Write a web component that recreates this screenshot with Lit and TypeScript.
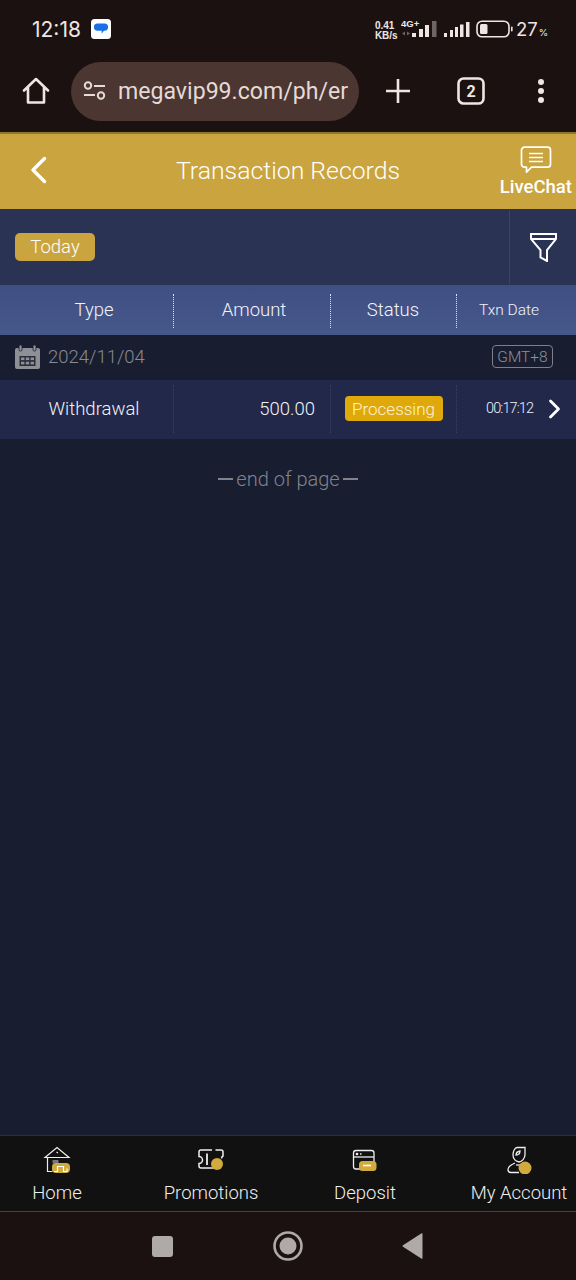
import { LitElement, html, css } from "lit";
import { customElement } from "lit/decorators.js";

@customElement("app-root")
export class AppRoot extends LitElement {
  static styles = css`
    :host { display: flex; flex-direction: column; width: 576px; height: 1280px; overflow: hidden; background: #181e30; font-family: Roboto, "Liberation Sans", sans-serif; color: #fff; }
    svg { display: block; flex: none; }
    .status { height: 60px; background: #1a1110; display: flex; align-items: center; padding: 0 0 2px 32px; box-sizing: border-box; color: #efe6e4; }
    .time { font-family: Inter, Roboto, sans-serif; font-size: 21px; font-weight: 400; width: 59px; }
    .spacer { flex: 1; }
    .speed { font: 700 10px/10px "Liberation Sans", sans-serif; width: 26px; margin-top: 4px; }
    .signal { margin-left: 5px; margin-top: 2px; }
    .battery { margin-left: 6px; }
    .pct { font-size: 18.5px; font-family: Inter, Roboto, sans-serif; margin-left: 2px; margin-right: 28px; display: flex; align-items: baseline; }
    .pct small { font-size: 9.5px; margin-left: 1px; }
    .toolbar { height: 72px; background: #1a1110; display: flex; align-items: center; padding-bottom: 10px; box-sizing: border-box; }
    .homebtn { width: 71px; display: flex; justify-content: center; }
    .url { width: 288px; height: 59px; border-radius: 30px; background: #4b3632; display: flex; align-items: center; padding-left: 12px; box-sizing: border-box; gap: 12px; color: #e6dad7; font-size: 23.1px; font-family: Roboto, sans-serif; white-space: nowrap; }
    .tools { flex: 1; display: flex; align-items: center; }
    .tools > div { display: flex; justify-content: center; }
    .header { height: 77px; box-sizing: border-box; border-top: 2px solid #8f7433; background: #c9a43f; display: flex; align-items: center; position: relative; justify-content: center; padding-bottom: 2px; }
    .back { position: absolute; left: 30px; top: 22px; }
    .title { font-size: 24.8px; font-weight: 300; color: #fff; }
    .chat { position: absolute; right: 4px; top: 12px; display: flex; flex-direction: column; align-items: center; font-size: 18.5px; font-weight: 500; gap: 3px; line-height: 20px; }
    .chat svg { margin-left: 1px; }
    .filterbar { height: 76px; box-sizing: border-box; background: #2a3353; display: flex; align-items: center; }
    .today { margin-left: 15px; width: 80px; height: 28px; border-radius: 5px; background: #c9a43f; font-size: 18.5px; font-weight: 300; display: flex; align-items: center; justify-content: center; }
    .funnel { width: 66px; height: 74px; border-left: 1px solid #3a4465; display: flex; align-items: center; justify-content: center; margin-left: auto; }
    .row { display: grid; grid-template-columns: 173px 157px 126px 120px; }
    .thead { height: 50px; background: linear-gradient(#3f4f84, #46578a); }
    .cell { display: flex; align-items: center; justify-content: center; position: relative; }
    .thead .cell { font-size: 18.5px; font-weight: 300; color: #f2f4fa; }
    .thead .cell + .cell::before, .tbody .cell + .cell::before { content: ""; position: absolute; left: 0; border-left: 1px dotted #dfe3ef; }
    .thead .cell + .cell::before { top: 9px; bottom: 7px; }
    .thead .small { font-size: 15.5px; padding-right: 14px; }
    .first { padding-left: 15px; }
    .second { padding-left: 5px; }
    .date { height: 45px; padding: 0 23px 2px 15px; box-sizing: border-box; background: #181e30; display: flex; align-items: center; color: #878a94; font-size: 18.5px; font-weight: 300; gap: 8px; }
    .gmt { margin-left: auto; border: 1px solid #7d808a; border-radius: 4px; font-size: 15.5px; width: 61px; height: 23px; display: flex; align-items: center; justify-content: center; box-sizing: border-box; font-weight: 300; color: #8d909a; }
    .tbody { height: 59px; background: #22284a; }
    .tbody .cell { font-size: 18.5px; font-weight: 300; color: #f2f2f6; padding-bottom: 2px; }
    .tbody .cell + .cell::before { top: 5px; bottom: 6px; border-left-color: #3a4160; }
    .amount { justify-content: flex-end !important; padding-right: 15px; }
    .badge { width: 98px; height: 25px; margin-left: 1px; border-radius: 4px; background: #dfa90b; font-size: 17px; font-weight: 300; display: flex; align-items: center; justify-content: center; color: #fdf3d2; }
    .time-cell { justify-content: flex-start !important; padding-left: 30px; gap: 15px; }
    .clock { font-size: 14.5px; letter-spacing: -0.9px; font-weight: 300; }
    .end { padding-top: 27px; height: 26px; display: flex; justify-content: center; align-items: center; gap: 3px; color: #80838e; font-size: 20px; font-weight: 300; }
    .end i { display: block; width: 15px; height: 1.5px; background: #80838e; }
    .main { flex: 1; }
    .nav { height: 76px; background: #111111; border-top: 1px solid #2b3038; box-sizing: border-box; display: grid; grid-template-columns: repeat(4, 154px); justify-content: center; }
    .nav a { display: flex; flex-direction: column; align-items: center; padding-top: 10px; font-size: 18.5px; font-weight: 300; color: #f0f0f0; line-height: 22px; gap: 8px; }
    .sys { height: 69px; box-sizing: border-box; border-top: 1px solid #4a3f3c; background: #1a1110; display: flex; align-items: center; padding: 0 0 0 152px; }
    .square { width: 21px; height: 21px; border-radius: 3px; background: #afa9a8; }
    .ring { margin-left: 100px; }
    .tri { margin-left: 99px; }
  `;

  render() {
    return html`
      <div class="status">
        <div class="time">12:18</div>
        <svg width="20" height="20" viewBox="0 0 20 20"><rect width="20" height="20" rx="3.5" fill="#fff"/><path d="M6.5 4.5h7a3.6 3.6 0 0 1 0 7.2h-.6l-2.2 3v-3H6.5a3.6 3.6 0 0 1 0-7.2z" fill="#1a6fe8"/></svg>
        <div class="spacer"></div>
        <div class="speed">0.41<br />KB/s</div>
        <svg width="37" height="24" viewBox="0 0 37 24">
          <text x="0" y="9.5" font-family="Liberation Sans" font-weight="700" font-size="9.5" fill="#efe6e4">4G+</text>
          <path d="M1 16.5l3-2v4zM9 16.5l-3-2v4z" fill="#6c6462"/>
          <rect x="11" y="16" width="4" height="4" fill="#efe6e4"/><rect x="18" y="12" width="4" height="8" fill="#efe6e4"/><rect x="24" y="8" width="4" height="12" fill="#efe6e4"/><rect x="31" y="4" width="4.5" height="16" fill="#6e6664"/>
        </svg>
        <svg class="signal" width="27" height="18" viewBox="0 0 27 18">
          <rect x="1" y="12" width="3" height="4" fill="#efe6e4"/><rect x="7" y="9" width="3" height="7" fill="#efe6e4"/><rect x="12" y="6" width="3" height="10" fill="#efe6e4"/><rect x="17" y="3.5" width="3.5" height="12.5" fill="#efe6e4"/><rect x="23" y="1" width="3.5" height="15" fill="#efe6e4"/>
        </svg>
        <svg class="battery" width="38" height="18" viewBox="0 0 38 18">
          <rect x="1" y="1.2" width="32" height="15.6" rx="5" fill="none" stroke="#efe6e4" stroke-width="1.6"/><rect x="4" y="4" width="7.5" height="10" rx="1.5" fill="#efe6e4"/><rect x="35" y="6.5" width="1.6" height="5" rx="0.8" fill="#efe6e4"/>
        </svg>
        <div class="pct">27<small>%</small></div>
      </div>

      <div class="toolbar">
        <div class="homebtn">
          <svg width="28" height="28" viewBox="0 0 28 28" fill="none" stroke="#efe6e4" stroke-width="2.6" stroke-linejoin="round" stroke-linecap="round"><path d="M2 13.5L14 2l12 11.5M6 10v15.5h16V10"/></svg>
        </div>
        <div class="url">
          <svg width="23" height="20" viewBox="0 0 23 20" fill="none" stroke="#e6dad7" stroke-width="2"><circle cx="5" cy="4.5" r="3.2"/><path d="M11 5h11M1 14h11"/><circle cx="18" cy="14.5" r="3.2"/></svg>
          <span>megavip99.com/ph/er</span>
        </div>
        <div class="tools">
          <div style="width:77px">
            <svg width="24" height="24" viewBox="0 0 24 24" stroke="#efe6e4" stroke-width="2.6"><path d="M12 0v24M0 12h24"/></svg>
          </div>
          <div style="width:70px">
            <svg width="28" height="28" viewBox="0 0 28 28"><rect x="1.5" y="1.5" width="25" height="25" rx="5" fill="none" stroke="#efe6e4" stroke-width="2.6"/><text x="14" y="20" text-anchor="middle" font-family="Roboto" font-weight="700" font-size="16" fill="#efe6e4">2</text></svg>
          </div>
          <div style="width:70px">
            <svg width="8" height="26" viewBox="0 0 8 26" fill="#efe6e4"><circle cx="4" cy="4" r="3"/><circle cx="4" cy="13" r="3"/><circle cx="4" cy="22" r="3"/></svg>
          </div>
        </div>
      </div>

      <div class="header">
        <svg class="back" width="17" height="28" viewBox="0 0 17 28" fill="none" stroke="#fff" stroke-width="3.4" stroke-linecap="round" stroke-linejoin="round"><path d="M14.5 2.5L3 14l11.5 11.5"/></svg>
        <div class="title">Transaction Records</div>
        <div class="chat">
          <svg width="32" height="28" viewBox="0 0 32 28" fill="none" stroke="#fff" stroke-width="1.7" stroke-linejoin="round"><path d="M4.5 1.2h23a3 3 0 0 1 3 3v14a3 3 0 0 1-3 3h-16l-5 5v-5h-2a3 3 0 0 1-3-3v-14a3 3 0 0 1 3-3z"/><path d="M9 7.5h14M9 11.5h14M9 15.5h14"/></svg>
          <span>LiveChat</span>
        </div>
      </div>

      <div class="filterbar">
        <div class="today">Today</div>
        <div class="funnel">
          <svg width="27" height="29" viewBox="0 0 27 29" fill="none" stroke="#fff" stroke-width="2"><path d="M1 1h25v5L17 17v11l-6.5-3.5V17L1 6zM1 6h25"/></svg>
        </div>
      </div>

      <div class="row thead">
        <div class="cell first">Type</div>
        <div class="cell second">Amount</div>
        <div class="cell">Status</div>
        <div class="cell"><span class="small">Txn Date</span></div>
      </div>

      <div class="date">
        <svg width="25" height="24" viewBox="0 0 25 24"><rect x="0" y="3" width="25" height="21" rx="2" fill="#8e9096"/><rect x="4" y="0" width="3" height="6" rx="1.2" fill="#8e9096" stroke="#181e30" stroke-width=".8"/><rect x="18" y="0" width="3" height="6" rx="1.2" fill="#8e9096" stroke="#181e30" stroke-width=".8"/><rect x="4.5" y="11" width="16" height="10" fill="#2b2f3d"/><g fill="#8e9096"><rect x="6" y="12.5" width="3.4" height="2.6"/><rect x="10.8" y="12.5" width="3.4" height="2.6"/><rect x="15.6" y="12.5" width="3.4" height="2.6"/><rect x="6" y="16.8" width="3.4" height="2.6"/><rect x="10.8" y="16.8" width="3.4" height="2.6"/><rect x="15.6" y="16.8" width="3.4" height="2.6"/></g></svg>
        <span>2024/11/04</span>
        <div class="gmt">GMT+8</div>
      </div>

      <div class="row tbody">
        <div class="cell first">Withdrawal</div>
        <div class="cell amount">500.00</div>
        <div class="cell"><div class="badge">Processing</div></div>
        <div class="cell time-cell">
          <span class="clock">00:17:12</span>
          <svg width="13" height="20" viewBox="0 0 13 20" fill="none" stroke="#fff" stroke-width="2.8" stroke-linecap="round" stroke-linejoin="round"><path d="M2.5 2l8 8-8 8"/></svg>
        </div>
      </div>

      <div class="main">
        <div class="end"><i></i><span>end of page</span><i></i></div>
      </div>

      <div class="nav">
        <a>
          <svg width="30" height="28" viewBox="0 0 30 28" fill="none" stroke="#eee" stroke-width="1.2"><path d="M3 11.500L15 1.500l12 10H3zM5.500 11.500v14h5"/><path d="M14.500 6l1.500 1"/><rect x="10.500" y="14" width="6" height="3.500" fill="#777" stroke="none"/><rect x="10" y="17" width="18" height="10" rx="4" fill="#d2a93c" stroke="none"/><path d="M12 25.500h3.500v-5h6v5h3.500v-3" stroke="#fff"/></svg>
          <span>Home</span>
        </a>
        <a>
          <svg width="30" height="28" viewBox="0 0 30 28" fill="none" stroke="#eee" stroke-width="1.5"><path d="M5 4a2 2 0 0 0-2 2v4.500a3.500 3.500 0 0 1 0 7V20a2 2 0 0 0 2 2h12M5 4h11M19.500 4H25a2 2 0 0 1 2 2v4a3 3 0 0 0-1.500 2.500"/><path d="M11 7.500v11.500" stroke-width="1.8"/><circle cx="21" cy="18" r="6" fill="#d2a93c" stroke="none"/></svg>
          <span>Promotions</span>
        </a>
        <a>
          <svg width="30" height="28" viewBox="0 0 30 28" fill="none" stroke="#eee" stroke-width="1.3"><rect x="3.500" y="4.500" width="20.500" height="18.500" rx="2.500"/><path d="M3.500 11H24"/><circle cx="7" cy="8" r=".7" fill="#eee"/><path d="M10 8h1.500"/><rect x="9" y="15" width="17.500" height="10" rx="3.500" fill="#d2a93c" stroke="none"/><path d="M13 19.500h8" stroke="#fff" stroke-width="1.6"/></svg>
          <span>Deposit</span>
        </a>
        <a>
          <svg width="30" height="28" viewBox="0 0 30 28" fill="none" stroke="#eee" stroke-width="1.3"><path d="M13 1.500h8v7c0 4-3 7-6 7.500-3-.5-6-3-6-7 0-4 2-7.500 4-7.500z"/><path d="M12 9c0-2 1.500-3.500 4-4 0 2.500-1.500 4-4 4z"/><path d="M11 17c-3.500 1.500-7 3.500-7 6.500 0 2 1 3 3 3h8"/><path d="M12 19h4"/><circle cx="21" cy="22" r="6.500" fill="#d2a93c" stroke="none"/></svg>
          <span>My Account</span>
        </a>
      </div>

      <div class="sys">
        <div class="square"></div>
        <svg class="ring" width="30" height="30" viewBox="0 0 30 30"><circle cx="15" cy="15" r="13.500" fill="none" stroke="#afa9a8" stroke-width="2.6"/><circle cx="15" cy="15" r="8.500" fill="#afa9a8"/></svg>
        <svg class="tri" width="21" height="26" viewBox="0 0 21 26"><path d="M20.500 1v24a.8.8 0 0 1-1.300.6L1 13.800a1 1 0 0 1 0-1.600L19.200.4a.8.8 0 0 1 1.300.6z" fill="#afa9a8"/></svg>
      </div>
    `;
  }
}
